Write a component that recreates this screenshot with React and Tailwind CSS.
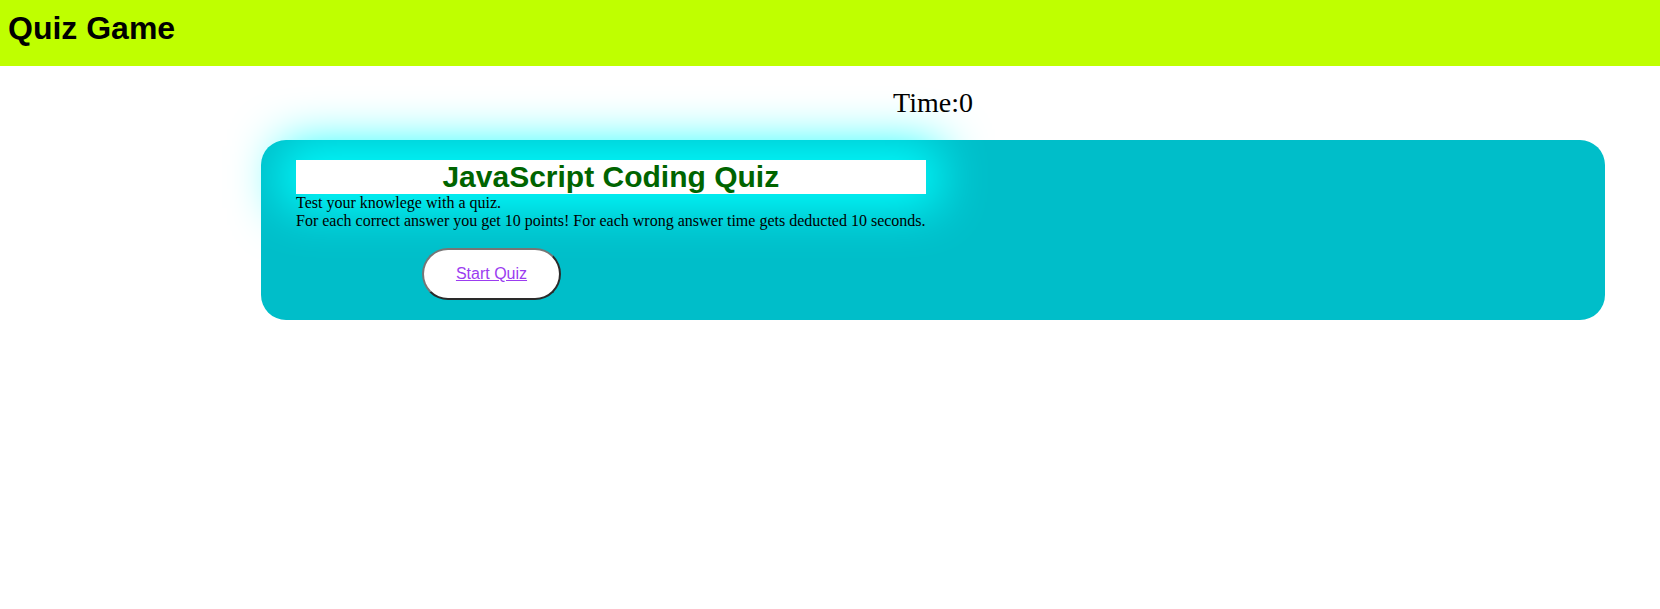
import React from 'react';

const App = () => {
  return (
    <div className="min-h-[609px] bg-white">
      <header className="h-[66px] bg-[#bfff00] pl-2 pt-[4px]">
        <h1 className="font-['Liberation_Sans',Arial,sans-serif] text-[32px] font-bold leading-normal text-black">
          Quiz Game
        </h1>
      </header>

      <div className="ml-[261px] w-[1344px]">
        {/* timer */}
        <div className="mt-[21px] text-center font-['Liberation_Serif','Times_New_Roman',serif] text-[28px] leading-[32px] text-black">
          Time:0
        </div>

        {/* quiz card */}
        <div className="mt-[21px] h-[180px] rounded-[25px] bg-[#00bec9] pl-[35px] pt-[20px]">
          <div className="w-fit">
            <h2 className="bg-white text-center font-['Liberation_Sans',Arial,sans-serif] text-[30px] font-bold leading-[34px] text-[#006400] shadow-[0_0_50px_14px_#00ffff]">
              JavaScript Coding Quiz
            </h2>
            <div className="font-['Liberation_Serif','Times_New_Roman',serif] text-[16px] leading-[18.4px] text-black">
              <p>Test your knowlege with a quiz.</p>
              <p>For each correct answer you get 10 points! For each wrong answer time gets deducted 10 seconds.</p>
            </div>
          </div>

          <div className="mt-[17px] pl-[126px]">
            <button className="h-[52px] w-[139px] rounded-full border-2 border-t-[#767676] border-l-[#767676] border-r-[#2a2a2a] border-b-[#2a2a2a] bg-white font-['Liberation_Sans',Arial,sans-serif] text-[16px]">
              <a href="#" className="text-[#9b3cf0] underline">
                Start Quiz
              </a>
            </button>
          </div>
        </div>
      </div>
    </div>
  );
};

export default App;
